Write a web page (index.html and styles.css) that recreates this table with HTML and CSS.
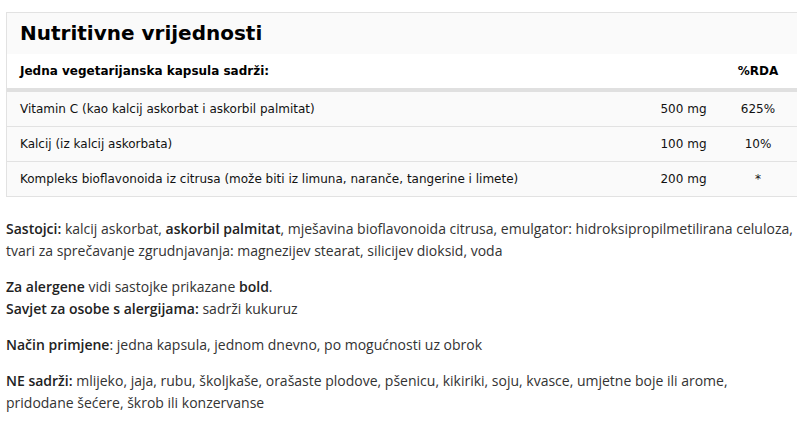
FILE: index.html
```html
<!DOCTYPE html>
<html lang="hr">
<head>
<meta charset="utf-8">
<title>Nutritivne vrijednosti</title>
<link rel="stylesheet" href="styles.css">
</head>
<body>
<div class="page">
  <div class="nutri">
    <div class="nutri-title">Nutritivne vrijednosti</div>
    <div class="nutri-head">
      <div class="c-name">Jedna vegetarijanska kapsula sadrži:</div>
      <div class="c-amt"></div>
      <div class="c-rda">%RDA</div>
    </div>
    <div class="nutri-row">
      <div class="c-name">Vitamin C (kao kalcij askorbat i askorbil palmitat)</div>
      <div class="c-amt">500 mg</div>
      <div class="c-rda">625%</div>
    </div>
    <div class="nutri-row">
      <div class="c-name">Kalcij (iz kalcij askorbata)</div>
      <div class="c-amt">100 mg</div>
      <div class="c-rda">10%</div>
    </div>
    <div class="nutri-row">
      <div class="c-name">Kompleks bioflavonoida iz citrusa (može biti iz limuna, naranče, tangerine i limete)</div>
      <div class="c-amt">200 mg</div>
      <div class="c-rda">*</div>
    </div>
  </div>
  <div class="info">
    <p><strong>Sastojci:</strong> kalcij askorbat, <strong>askorbil palmitat</strong>, mješavina bioflavonoida citrusa, emulgator: hidroksipropilmetilirana celuloza, tvari za sprečavanje zgrudnjavanja: magnezijev stearat, silicijev dioksid, voda</p>
    <p><strong>Za alergene</strong> vidi sastojke prikazane <strong>bold</strong>.<br><strong>Savjet za osobe s alergijama:</strong> sadrži kukuruz</p>
    <p><strong>Način primjene</strong>: jedna kapsula, jednom dnevno, po mogućnosti uz obrok</p>
    <p><strong>NE sadrži:</strong> mlijeko, jaja, rubu, školjkaše, orašaste plodove, pšenicu, kikiriki, soju, kvasce, umjetne boje ili arome, pridodane šećere, škrob ili konzervanse</p>
  </div>
</div>
</body>
</html>
```
FILE: styles.css
```css
html, body {
  margin: 0;
  padding: 0;
  background: #fff;
}

.page {
  padding: 12px 9px 0 6px;
}

.nutri {
  width: 791px;
  box-sizing: border-box;
  border-top: 1px solid #e2e2e2;
  border-left: 1px solid #e2e2e2;
  background: #fafafa;
  font-family: "DejaVu Sans", Verdana, sans-serif;
  color: #111;
}

.nutri-title {
  height: 41px;
  padding-left: 13px;
  font-size: 20px;
  font-weight: bold;
  line-height: 40px;
  color: #000;
}

.nutri-head,
.nutri-row {
  display: grid;
  grid-template-columns: 641px 71px 78px;
  align-items: center;
  height: 34px;
  font-size: 12px;
}

.nutri-head {
  background: #fff;
  border-bottom: 4px solid #e0e0e0;
  font-weight: bold;
  color: #000;
}

.nutri-row {
  border-bottom: 1px solid #e2e2e2;
}

.c-name {
  padding-left: 13px;
}

.c-amt,
.c-rda {
  text-align: center;
}

.info {
  margin-top: 21px;
  width: 791px;
  font-family: "Open Sans", sans-serif;
  font-size: 14px;
  line-height: 22px;
  color: #333;
}

.info p {
  margin: 0 0 14px;
}

.info strong {
  font-weight: 600;
  color: #222;
}
```
